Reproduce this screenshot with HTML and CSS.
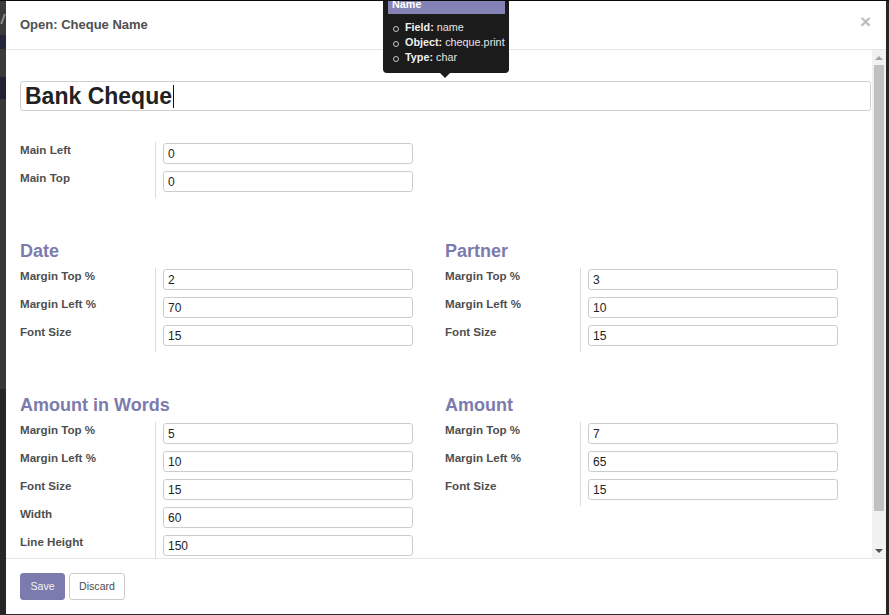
FILE: index.html
```html
<!DOCTYPE html>
<html>
<head>
<meta charset="utf-8">
<title>Open: Cheque Name</title>
<link rel="stylesheet" href="styles.css">
</head>
<body>
<div class="page">
  <div class="backdrop-left">
    <div class="bl bl-a"><span class="bl-slash"></span></div>
    <div class="bl bl-b"></div>
    <div class="bl bl-c"></div>
    <div class="bl bl-d"></div>
    <div class="bl bl-e"></div>
    <div class="bl bl-f"></div>
  </div>

  <div class="modal">
    <div class="modal-header">
      <h4 class="modal-title">Open: Cheque Name</h4>
      <span class="close">×</span>
    </div>

    <div class="modal-body">
      <div class="sheet">
        <div class="name-field"><span class="name-text">Bank Cheque</span><span class="caret"></span></div>

        <div class="group first">
          <div class="row"><div class="lbl">Main Left</div><div class="cell"><div class="input">0</div></div></div>
          <div class="row"><div class="lbl">Main Top</div><div class="cell"><div class="input">0</div></div></div>
        </div>

        <div class="cols">
          <div class="col">
            <h3 class="sep-title">Date</h3>
            <div class="group">
              <div class="row"><div class="lbl">Margin Top %</div><div class="cell"><div class="input">2</div></div></div>
              <div class="row"><div class="lbl">Margin Left %</div><div class="cell"><div class="input">70</div></div></div>
              <div class="row"><div class="lbl">Font Size</div><div class="cell"><div class="input">15</div></div></div>
            </div>
          </div>
          <div class="col">
            <h3 class="sep-title">Partner</h3>
            <div class="group">
              <div class="row"><div class="lbl">Margin Top %</div><div class="cell"><div class="input">3</div></div></div>
              <div class="row"><div class="lbl">Margin Left %</div><div class="cell"><div class="input">10</div></div></div>
              <div class="row"><div class="lbl">Font Size</div><div class="cell"><div class="input">15</div></div></div>
            </div>
          </div>
        </div>

        <div class="cols">
          <div class="col">
            <h3 class="sep-title">Amount in Words</h3>
            <div class="group">
              <div class="row"><div class="lbl">Margin Top %</div><div class="cell"><div class="input">5</div></div></div>
              <div class="row"><div class="lbl">Margin Left %</div><div class="cell"><div class="input">10</div></div></div>
              <div class="row"><div class="lbl">Font Size</div><div class="cell"><div class="input">15</div></div></div>
              <div class="row"><div class="lbl">Width</div><div class="cell"><div class="input">60</div></div></div>
              <div class="row"><div class="lbl">Line Height</div><div class="cell"><div class="input">150</div></div></div>
            </div>
          </div>
          <div class="col">
            <h3 class="sep-title">Amount</h3>
            <div class="group">
              <div class="row"><div class="lbl">Margin Top %</div><div class="cell"><div class="input">7</div></div></div>
              <div class="row"><div class="lbl">Margin Left %</div><div class="cell"><div class="input">65</div></div></div>
              <div class="row"><div class="lbl">Font Size</div><div class="cell"><div class="input">15</div></div></div>
            </div>
          </div>
        </div>
      </div>

      <div class="scrollbar">
        <div class="sb-btn"><span class="tri-up"></span></div>
        <div class="sb-track"><div class="sb-thumb"></div></div>
        <div class="sb-btn"><span class="tri-down"></span></div>
      </div>
    </div>

    <div class="modal-footer">
      <button class="btn btn-primary">Save</button>
      <button class="btn btn-default">Discard</button>
    </div>

    <div class="tooltip">
      <div class="tt-title">Name</div>
      <ul class="tt-list">
        <li><b>Field:</b> name</li>
        <li><b>Object:</b> cheque.print</li>
        <li><b>Type:</b> char</li>
      </ul>
    </div>
  </div>

  <div class="backdrop-right"></div>
</div>
</body>
</html>
```

FILE: styles.css
```css
* { box-sizing: border-box; }

html, body {
  margin: 0;
  padding: 0;
  background: #2b2b2b;
}

body {
  font-family: "Liberation Sans", Arial, Helvetica, sans-serif;
  color: #333;
}

.page {
  display: flex;
  width: 889px;
  height: 615px;
  border-top: 1px solid #0b0b0b;
  overflow: hidden;
}

/* dimmed application behind the dialog */
.backdrop-left {
  width: 6px;
  flex: none;
  display: flex;
  flex-direction: column;
  overflow: hidden;
}
.bl { width: 6px; }
.bl-a { height: 34px; background: #3b3b3b; position: relative; overflow: hidden; }
.bl-slash {
  display: block;
  width: 2px;
  height: 10px;
  background: #8c8c8c;
  margin: 13px 0 0 2px;
  transform: skewX(-20deg);
}
.bl-b { height: 14px; background: #26263a; }
.bl-c { height: 28px; background: #3a3a3a; }
.bl-d { height: 22px; background: #212133; }
.bl-e { height: 290px; background: #383838; }
.bl-f { flex: 1; background: #262626; }

.backdrop-right {
  width: 3px;
  flex: none;
  background: #262626;
}

/* dialog */
.modal {
  position: relative;
  width: 880px;
  height: 613px;
  flex: none;
  background: #fff;
  display: flex;
  flex-direction: column;
}

.modal-header {
  height: 49px;
  flex: none;
  border-bottom: 1px solid #e5e5e5;
  display: flex;
  align-items: center;
  justify-content: space-between;
  padding: 0 14px 0 14px;
}

.modal-title {
  margin: 0;
  font-size: 13px;
  font-weight: bold;
  color: #505050;
  line-height: 18px;
}

.close {
  font-size: 19px;
  font-weight: bold;
  color: #bdbdbd;
  line-height: 18px;
  margin-right: 1px;
  margin-top: -7px;
}

.modal-body {
  height: 508px;
  flex: none;
  display: flex;
  overflow: hidden;
}

.sheet {
  flex: 1;
  padding: 31px 1px 0 14px;
  overflow: hidden;
}

.name-field {
  height: 30px;
  border: 1px solid #cfcfcf;
  border-radius: 3px;
  display: flex;
  align-items: center;
  padding: 0 4px;
}

.name-text {
  font-size: 23px;
  font-weight: bold;
  color: #222;
  line-height: 26px;
}

.caret {
  width: 1px;
  height: 23px;
  background: #111;
  margin-left: 1px;
}

.group {
  display: flex;
  flex-direction: column;
}

.group.first {
  margin-top: 31px;
}

.row {
  display: flex;
  height: 28px;
}

.lbl {
  width: 135px;
  flex: none;
  font-size: 11.6px;
  font-weight: bold;
  line-height: 16px;
  color: #4f4f4f;
}

.cell {
  border-left: 1px solid #dcdcdc;
  padding-left: 7px;
  flex: 1;
}

.input {
  margin-top: 1px;
  width: 250px;
  height: 21px;
  border: 1px solid #cdcdcd;
  border-radius: 3px;
  padding: 1px 4px 0 4px;
  font-size: 12px;
  line-height: 19px;
  color: #222;
}

.cols {
  display: grid;
  grid-template-columns: 425px 1fr;
  margin-top: 42px;
}

.col { min-width: 0; }

.sep-title {
  margin: 0 0 6px 0;
  font-size: 18px;
  line-height: 22px;
  font-weight: bold;
  color: #7c7bad;
}

/* scrollbar */
.scrollbar {
  width: 14px;
  flex: none;
  background: #f1f1f1;
  display: flex;
  flex-direction: column;
}

.sb-btn {
  height: 15px;
  flex: none;
  display: flex;
  align-items: center;
  justify-content: center;
}

.tri-up {
  width: 0;
  height: 0;
  border-left: 4px solid transparent;
  border-right: 4px solid transparent;
  border-bottom: 4px solid #a3a3a3;
}

.tri-down {
  width: 0;
  height: 0;
  border-left: 4px solid transparent;
  border-right: 4px solid transparent;
  border-top: 4px solid #505050;
}

.sb-track {
  flex: 1;
  padding: 0 2px 31px 2px;
}

.sb-thumb {
  height: 446px;
  background: #c1c1c1;
}

/* footer */
.modal-footer {
  flex: 1;
  border-top: 1px solid #e5e5e5;
  padding: 14px 14px 0 14px;
  display: flex;
  align-items: flex-start;
  gap: 4px;
}

.btn {
  height: 27px;
  padding: 0 9px;
  border-radius: 3px;
  font-family: "Liberation Sans", Arial, Helvetica, sans-serif;
  font-size: 10.6px;
  line-height: 25px;
}

.btn-primary {
  background: #7c7bad;
  border: 1px solid #7c7bad;
  color: #f2f2f2;
  width: 45px;
  padding: 0;
}

.btn-default {
  background: #fff;
  border: 1px solid #cccccc;
  color: #4c4c4c;
  width: 56px;
  padding: 0;
}

/* field tooltip */
.tooltip {
  position: absolute;
  left: 377px;
  top: -10px;
  width: 126px;
  background: #1b1b1b;
  border-radius: 4px;
  padding: 4px 0 8px 0;
  color: #e6e6e6;
  font-size: 10.8px;
}

.tooltip::after {
  content: "";
  position: absolute;
  left: 57px;
  bottom: -5px;
  border-left: 5px solid transparent;
  border-right: 5px solid transparent;
  border-top: 5px solid #1b1b1b;
}

.tt-title {
  margin: 0 4px 0 5px;
  background: #8583b6;
  color: #fff;
  font-weight: bold;
  line-height: 15px;
  padding: 2px 4px;
}

.tt-list {
  list-style: none;
  margin: 6px 0 0 0;
  padding: 0 0 0 22px;
}

.tt-list li {
  position: relative;
  line-height: 15px;
  white-space: nowrap;
}

.tt-list li::before {
  content: "";
  position: absolute;
  left: -12px;
  top: 6px;
  width: 4px;
  height: 4px;
  border: 1px solid #c8c8c8;
  border-radius: 50%;
}

.tt-list b {
  color: #f0f0f0;
}
```
